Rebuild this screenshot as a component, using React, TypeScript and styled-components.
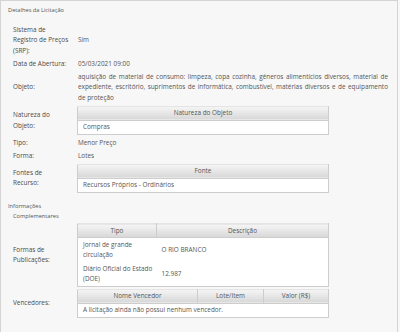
import React from 'react';
import styled, { createGlobalStyle } from 'styled-components';

const Global = createGlobalStyle`
  html, body { margin: 0; padding: 0; background: #f7f7f7; }
  body { font-family: "Open Sans", "Liberation Sans", sans-serif; }
`;

const Panel = styled.div`
  box-sizing: border-box;
  width: 398px;
  min-height: 332px;
  border: 1px solid #d4d4d4;
  border-bottom: none;
  background: #f7f7f7;
  padding: 0 10px 0 12px;
  color: #555;
  font-size: 6.4px;
  line-height: 10.5px;
`;

const Legend = styled.div`
  margin-left: -5px;
  font-size: 5.7px;
  line-height: 10px;
  color: #555;
  padding: 4px 0 8.5px;
`;

const SubLegend = styled(Legend)`
  padding: 6.5px 0 1.5px;
`;

const Indent = styled.div`
  padding-left: 5px;
`;

const Row = styled.div<{ $pad?: number }>`
  display: grid;
  grid-template-columns: 65px 310px;
  align-items: center;
  padding: ${(p) => p.$pad ?? 1.25}px 0;
`;

const Label = styled.div`
  color: #4a4a4a;
`;

const Value = styled.div<{ $justify?: boolean }>`
  color: #555;
  text-align: ${(p) => (p.$justify ? 'justify' : 'left')};
`;

const Table = styled.table`
  width: 252px;
  margin-left: -1px;
  border-collapse: collapse;
  table-layout: fixed;
  background: #fff;
  border: 1px solid #cdcdcd;
`;

const Th = styled.th`
  font-weight: normal;
  color: #555;
  height: 13px;
  padding: 0 5px;
  line-height: 12px;
  text-align: center;
  background: linear-gradient(#f6f6f6, #d7d7d7);
  border: 1px solid #cdcdcd;
  border-top-color: #e4e4e4;
`;

const Td = styled.td`
  padding: 1.5px 4px 1.5px 5px;
  text-align: left;
  vertical-align: middle;
  color: #555;
`;

export default function App() {
  return (
    <>
      <Global />
      <Panel>
        <Legend>Detalhes da Licitação</Legend>

        <Row>
          <Label>
            Sistema de
            <br />
            Registro de Preços
            <br />
            (SRP):
          </Label>
          <Value>Sim</Value>
        </Row>

        <Row>
          <Label>Data de Abertura:</Label>
          <Value>05/03/2021 09:00</Value>
        </Row>

        <Row>
          <Label>Objeto:</Label>
          <Value $justify>
            aquisição de material de consumo: limpeza, copa cozinha, gêneros alimentícios diversos,
            material de expediente, escritório, suprimentos de informática, combustível, matérias
            diversos e de equipamento de proteção
          </Value>
        </Row>

        <Row $pad={1.25}>
          <Label>
            Natureza do
            <br />
            Objeto:
          </Label>
          <Value>
            <Table>
              <thead>
                <tr>
                  <Th>Natureza do Objeto</Th>
                </tr>
              </thead>
              <tbody>
                <tr>
                  <Td>Compras</Td>
                </tr>
              </tbody>
            </Table>
          </Value>
        </Row>

        <Row>
          <Label>Tipo:</Label>
          <Value>Menor Preço</Value>
        </Row>

        <Row>
          <Label>Forma:</Label>
          <Value>Lotes</Value>
        </Row>

        <Row $pad={1}>
          <Label>
            Fontes de
            <br />
            Recurso:
          </Label>
          <Value>
            <Table>
              <thead>
                <tr>
                  <Th>Fonte</Th>
                </tr>
              </thead>
              <tbody>
                <tr>
                  <Td>Recursos Próprios - Ordinários</Td>
                </tr>
              </tbody>
            </Table>
          </Value>
        </Row>

        <SubLegend>
          Informações
          <Indent>Complementares</Indent>
        </SubLegend>

        <Row $pad={1}>
          <Label>
            Formas de
            <br />
            Publicações:
          </Label>
          <Value>
            <Table>
              <colgroup>
                <col style={{ width: 79 }} />
                <col />
              </colgroup>
              <thead>
                <tr>
                  <Th>Tipo</Th>
                  <Th>Descrição</Th>
                </tr>
              </thead>
              <tbody>
                <tr>
                  <Td>
                    Jornal de grande
                    <br />
                    circulação
                  </Td>
                  <Td>O RIO BRANCO</Td>
                </tr>
                <tr>
                  <Td>
                    Diário Oficial do Estado
                    <br />
                    (DOE)
                  </Td>
                  <Td>12.987</Td>
                </tr>
              </tbody>
            </Table>
          </Value>
        </Row>

        <Row $pad={0.5}>
          <Label>Vencedores:</Label>
          <Value>
            <Table>
              <colgroup>
                <col style={{ width: 120 }} />
                <col style={{ width: 66 }} />
                <col />
              </colgroup>
              <thead>
                <tr>
                  <Th>Nome Vencedor</Th>
                  <Th>Lote/Item</Th>
                  <Th>Valor (R$)</Th>
                </tr>
              </thead>
              <tbody>
                <tr>
                  <Td colSpan={3}>A licitação ainda não possui nenhum vencedor.</Td>
                </tr>
              </tbody>
            </Table>
          </Value>
        </Row>
      </Panel>
    </>
  );
}
